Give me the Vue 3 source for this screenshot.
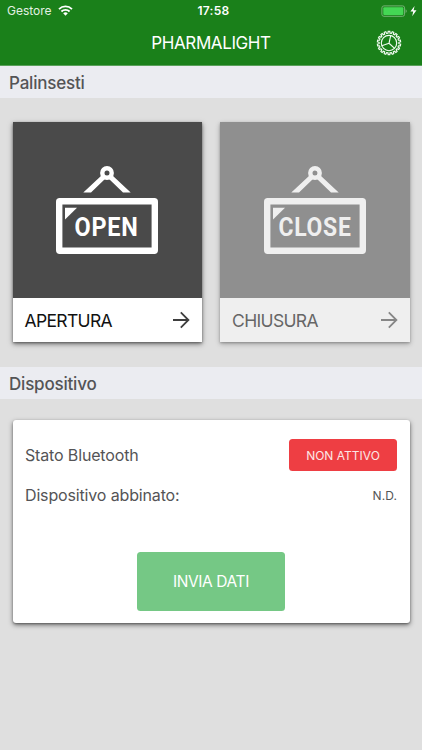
<script setup>
import { ref } from 'vue'

const schedules = ref([
  { id: 'open', sign: 'OPEN', signX: 18.5, signWidth: 64, label: 'APERTURA', enabled: true },
  { id: 'close', sign: 'CLOSE', signX: 14.5, signWidth: 73, label: 'CHIUSURA', enabled: false }
])

const device = ref({ bluetooth: 'NON ATTIVO', paired: 'N.D.' })

// gear outline, teeth alternate between the two radii
const gearPath = (teeth, inner, outer) => {
  const step = (Math.PI * 2) / teeth
  const points = []
  for (let i = 0; i < teeth; i++) {
    const a = i * step - Math.PI / 2
    const corners = [[-0.3, inner], [-0.2, outer], [0.2, outer], [0.3, inner]]
    corners.forEach(([offset, r]) => {
      const t = a + offset * step
      points.push(`${(13 + r * Math.cos(t)).toFixed(2)} ${(13 + r * Math.sin(t)).toFixed(2)}`)
    })
  }
  return `M${points.join('L')}Z`
}
const gear = gearPath(18, 9.9, 11.7)
</script>

<template>
  <div class="page">
    <header class="header">
      <div class="status-bar">
        <div class="carrier">
          <span>Gestore</span>
          <svg class="wifi" viewBox="0 0 15 11" width="15" height="11">
            <path d="M1 4.1a9.3 9.3 0 0 1 13 0" />
            <path d="M3.4 6.5a5.8 5.8 0 0 1 8.2 0" />
            <path class="dot" d="M7.5 10.7 5.2 8.3a3.3 3.3 0 0 1 4.6 0z" />
          </svg>
        </div>
        <div class="clock">17:58</div>
        <div class="power">
          <svg viewBox="0 0 37 12" width="37" height="12">
            <rect class="shell" x="0.9" y="0.9" width="22.7" height="10.4" rx="2" />
            <rect class="level" x="2.3" y="2.3" width="20" height="7.6" rx="1" />
            <path class="cap" d="M24.6 4.2c1.5.5 1.5 3.3 0 3.8z" />
            <path class="bolt" d="M33.6 1 29.4 6.6h2.8l-1 4.6 4.3-6h-2.9z" />
          </svg>
        </div>
      </div>
      <div class="nav-bar">
        <h1 class="title">PHARMALIGHT</h1>
        <button class="settings" aria-label="Impostazioni">
          <svg viewBox="0 0 26 26" width="26" height="26">
            <path :d="gear" />
            <circle cx="13" cy="13" r="7.7" />
            <path d="M13 13.3 14.7 5.5M13 13.3 5.8 15.7M13 13.3l5.6 5.1" />
          </svg>
        </button>
      </div>
    </header>

    <h2 class="section-title">Palinsesti</h2>
    <div class="schedules">
      <div
        v-for="item in schedules"
        :key="item.id"
        class="schedule"
        :class="{ disabled: !item.enabled }"
      >
        <div class="picture">
          <svg class="sign" viewBox="0 0 102 90" width="102" height="90">
            <path d="M27.3 27.5 45.5 10.5l5.5 2 5.5-2 18.2 17H67L52.5 13.5h-3L35 27.5z" />
            <circle class="ring" cx="51" cy="8" r="4.7" />
            <rect class="frame" x="3.2" y="36.2" width="95.6" height="49.6" rx="0.5" />
            <path d="M9 42.7h12L9 54.5z" />
            <text :x="item.signX" y="70.8" :textLength="item.signWidth" lengthAdjust="spacingAndGlyphs">{{ item.sign }}</text>
          </svg>
        </div>
        <div class="schedule-footer">
          <span class="schedule-label">{{ item.label }}</span>
          <svg class="arrow" viewBox="0 0 18 18" width="18" height="18">
            <path d="M1 9h15M8.8 1.4 16.4 9l-7.6 7.6" />
          </svg>
        </div>
      </div>
    </div>

    <h2 class="section-title">Dispositivo</h2>
    <div class="device">
      <div class="device-row">
        <span class="bluetooth-label">Stato Bluetooth</span>
        <span class="badge">{{ device.bluetooth }}</span>
      </div>
      <div class="device-row">
        <span class="paired-label">Dispositivo abbinato:</span>
        <span class="paired">{{ device.paired }}</span>
      </div>
      <button class="send">INVIA DATI</button>
    </div>
  </div>
</template>

<style>
body {
  background: #dfdfdf;
}
</style>

<style scoped>
* {
  box-sizing: border-box;
}

.page {
  min-height: 750px;
  background: #dfdfdf;
  color: #545456;
  font-family: Inter, "Liberation Sans", sans-serif;
  white-space: nowrap;
  overflow: hidden;
}

.header {
  height: 66px;
  background: #1a801a;
  border-bottom: 1px solid #59a05a;
  color: #fff;
}

.status-bar {
  display: grid;
  grid-template-columns: 1fr auto 1fr;
  align-items: center;
  height: 21px;
  padding: 0 4px 0 7px;
}

.carrier {
  display: flex;
  align-items: center;
  gap: 6px;
  font-size: 12px;
  color: #e2f0e2;
}

.wifi path {
  fill: none;
  stroke: #fff;
  stroke-width: 1.8;
}

.wifi .dot {
  fill: #fff;
  stroke: none;
}

.clock {
  padding-left: 2px;
  font-size: 12px;
  font-weight: 600;
  letter-spacing: 0.3px;
}

.power {
  display: flex;
  justify-content: flex-end;
}

.shell {
  fill: none;
  stroke: #75b375;
}

.level {
  fill: #44d754;
}

.cap {
  fill: #75b375;
}

.bolt {
  fill: #fff;
}

.nav-bar {
  display: grid;
  grid-template-columns: 1fr auto 1fr;
  align-items: center;
  height: 44px;
}

.title {
  grid-column: 2;
  margin: 0;
  font-size: 17px;
  font-weight: 400;
  letter-spacing: -0.4px;
  line-height: 20px;
}

.settings {
  display: flex;
  justify-self: end;
  margin-right: 20px;
  padding: 0;
  border: 0;
  background: none;
}

.settings svg {
  fill: none;
  stroke: #f2fbf2;
  stroke-width: 1.15;
}

.section-title {
  height: 32px;
  margin: 0;
  padding-left: 9px;
  background: #ebecf1;
  font-size: 17px;
  font-weight: 450;
  letter-spacing: -0.2px;
  line-height: 34px;
}

.schedules {
  display: grid;
  grid-template-columns: 1fr 1fr;
  gap: 18px;
  padding: 24.4px 12.5px 24.6px;
}

.schedule {
  height: 220px;
  background: #fff;
  box-shadow: 0 2px 5px rgba(0, 0, 0, 0.5), 0 1px 2px rgba(0, 0, 0, 0.3);
}

.schedule.disabled {
  background: #efefef;
  box-shadow: 0 2px 5px rgba(0, 0, 0, 0.28), 0 1px 2px rgba(0, 0, 0, 0.2);
}

.picture {
  display: flex;
  justify-content: center;
  height: 176px;
  padding-top: 43px;
  background: #4a4a4a;
}

.disabled .picture {
  background: #8f8f8f;
}

.sign {
  fill: #fff;
}

.disabled .sign {
  fill: #efefef;
}

.sign .ring {
  fill: #4a4a4a;
  stroke: #fff;
  stroke-width: 4.4;
}

.sign .frame {
  fill: none;
  stroke: #fff;
  stroke-width: 6.4;
  stroke-linejoin: round;
}

.disabled .sign .ring {
  fill: #8f8f8f;
  stroke: #efefef;
}

.disabled .sign .frame {
  stroke: #efefef;
}

.sign text {
  font-family: Roboto, "Liberation Sans", sans-serif;
  font-size: 25px;
  font-weight: 700;
  letter-spacing: 0.8px;
}

.schedule-footer {
  display: flex;
  align-items: center;
  justify-content: space-between;
  height: 44px;
  padding: 0 12px;
  color: #111;
}

.schedule-label {
  font-size: 17.5px;
  letter-spacing: -0.65px;
}

.disabled .schedule-label {
  color: #666;
}

.arrow {
  fill: none;
  stroke: #3e3e3e;
  stroke-width: 1.8;
}

.disabled .arrow {
  stroke: #868686;
}

.device {
  height: 203.5px;
  margin: 21px 12.5px 0;
  padding: 19px 12.5px 0;
  border-radius: 3px;
  background: #fff;
  box-shadow: 0 2px 5px rgba(0, 0, 0, 0.5), 0 1px 2px rgba(0, 0, 0, 0.3);
}

.device-row {
  display: flex;
  align-items: center;
  justify-content: space-between;
  height: 32px;
  margin-bottom: 8px;
  font-size: 16px;
  letter-spacing: -0.15px;
}

.badge {
  width: 108px;
  height: 32px;
  border-radius: 3.5px;
  background: #ee3e43;
  color: #fce6e6;
  font-size: 12px;
  letter-spacing: 0;
  line-height: 33px;
  text-align: center;
}

.paired {
  padding-top: 1px;
  font-size: 12px;
  letter-spacing: 0.1px;
}

.send {
  display: block;
  width: 148px;
  height: 59px;
  margin: 41px auto 0;
  border: 0;
  border-radius: 3.5px;
  background: #75c885;
  color: #fff;
  font-family: inherit;
  font-size: 15.5px;
  letter-spacing: -0.4px;
}
</style>
